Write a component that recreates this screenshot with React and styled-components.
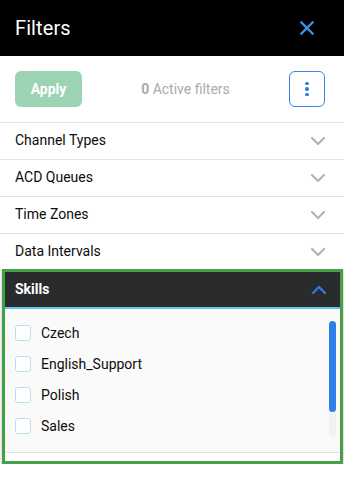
import React from "react";
import styled, { createGlobalStyle } from "styled-components";

const Global = createGlobalStyle`
  html, body { margin: 0; padding: 0; background: #fff; }
  body { font-family: Roboto, "Noto Sans", Arial, sans-serif; }
  * { box-sizing: border-box; }
`;

const Panel = styled.div`
  width: 344px;
  background: #fff;
`;

const Header = styled.header`
  height: 56px;
  background: #000;
  display: flex;
  align-items: center;
  justify-content: space-between;
  padding: 0 30px 0 15px;
`;

const Title = styled.h1`
  margin: 0;
  font-size: 20px;
  font-weight: 400;
  color: #fff;
  letter-spacing: 0.1px;
`;

const IconButton = styled.button`
  border: 0;
  background: none;
  padding: 0;
  display: flex;
  align-items: center;
  justify-content: center;
  cursor: pointer;
`;

const Toolbar = styled.div`
  display: flex;
  align-items: center;
  padding: 15px 19px 15px 15px;
  border-bottom: 1px solid #e2e2e2;
`;

const ApplyButton = styled.button`
  width: 67px;
  height: 36px;
  border: 0;
  border-radius: 6px;
  background: #9bd3b3;
  color: #fff;
  font-family: inherit;
  font-size: 14px;
  font-weight: 700;
`;

const ActiveCount = styled.div`
  flex: 1;
  text-align: center;
  font-size: 14px;
  color: #a9abae;
  b { font-weight: 700; }
`;

const KebabButton = styled.button`
  width: 36px;
  height: 36px;
  border: 1px solid #3b82ea;
  border-radius: 6px;
  background: #fff;
  display: flex;
  flex-direction: column;
  align-items: center;
  justify-content: center;
  gap: 2px;
  padding: 0;
`;

const Dot = styled.span`
  width: 3.5px;
  height: 3.5px;
  border-radius: 50%;
  background: #2f7de1;
`;

const Label = styled.span`
  position: relative;
  top: -1px;
`;

const Row = styled.div`
  height: 37px;
  display: flex;
  align-items: center;
  justify-content: space-between;
  padding: 0 14px 0 15px;
  border-bottom: 1px solid #e2e2e2;
  font-size: 14px;
  font-weight: 400;
  color: #0d0d0d;
`;

const SkillsBox = styled.section`
  margin: -2px 1px 0 2px;
  border: 3px solid #46a046;
  box-shadow: 0 2px 3px rgba(0, 0, 0, 0.3);
  background: #fff;
`;

const SkillsHeader = styled.div`
  height: 37px;
  background: #2a2b2d;
  display: flex;
  align-items: center;
  justify-content: space-between;
  padding: 0 9px 0 10px;
  border-bottom: 2px solid #5ec8f2;
  font-size: 14px;
  font-weight: 700;
  color: #fff;
`;

const ListArea = styled.div`
  background: #fafafa;
  padding: 8px 4px 15px 0;
  border-bottom: 1px solid #e2e2e2;
  display: flex;
`;

const Viewport = styled.div`
  flex: 1;
  height: 120px;
  overflow: hidden;
`;

const Track = styled.div`
  width: 7px;
  height: 116px;
  margin-top: 4px;
  border-radius: 4px;
  background: #f0f1f4;
`;

const Thumb = styled.div`
  width: 7px;
  border-radius: 4px;
  background: #2f7fe8;
`;

const Option = styled.label`
  height: 31px;
  display: flex;
  align-items: center;
  gap: 10px;
  padding-left: 10px;
  font-size: 14px;
  font-weight: 400;
  color: #0d0d0d;
`;

const Box = styled.span`
  width: 16px;
  height: 16px;
  border: 1px solid #bcdff0;
  border-radius: 3px;
  background: #fff;
  flex: none;
`;

const Footer = styled.div`
  height: 8px;
  background: #fff;
`;

const Chevron = ({ up, color }) => (
  <svg width="24" height="24" viewBox="0 0 24 24" fill="none" stroke={color} strokeWidth="2.2" strokeLinecap="round" strokeLinejoin="round">
    <path d={up ? "M6 15l6-6 6 6" : "M6 9l6 6 6-6"} />
  </svg>
);

const sections = ["Channel Types", "ACD Queues", "Time Zones", "Data Intervals"];
const skills = ["Czech", "English_Support", "Polish", "Sales"];

export default function App() {
  return (
    <Panel>
      <Global />
      <Header>
        <Title>Filters</Title>
        <IconButton aria-label="Close">
          <svg width="14" height="14" viewBox="0 0 14 14" stroke="#3b8ee8" strokeWidth="2.4" strokeLinecap="square">
            <path d="M1.5 1.5l11 11M12.5 1.5l-11 11" />
          </svg>
        </IconButton>
      </Header>
      <Toolbar>
        <ApplyButton>Apply</ApplyButton>
        <ActiveCount><b>0</b> Active filters</ActiveCount>
        <KebabButton aria-label="More">
          <Dot /><Dot /><Dot />
        </KebabButton>
      </Toolbar>
      {sections.map((s) => (
        <Row key={s}>
          <Label>{s}</Label>
          <Chevron color="#b3b3b3" />
        </Row>
      ))}
      <SkillsBox>
        <SkillsHeader>
          <Label>Skills</Label>
          <Chevron up color="#2f7fe8" />
        </SkillsHeader>
        <ListArea>
          <Viewport>
            {skills.map((k) => (
              <Option key={k}>
                <Box />
                {k}
              </Option>
            ))}
          </Viewport>
          <Track>
            <Thumb style={{ height: 91 }} />
          </Track>
        </ListArea>
        <Footer />
      </SkillsBox>
    </Panel>
  );
}
